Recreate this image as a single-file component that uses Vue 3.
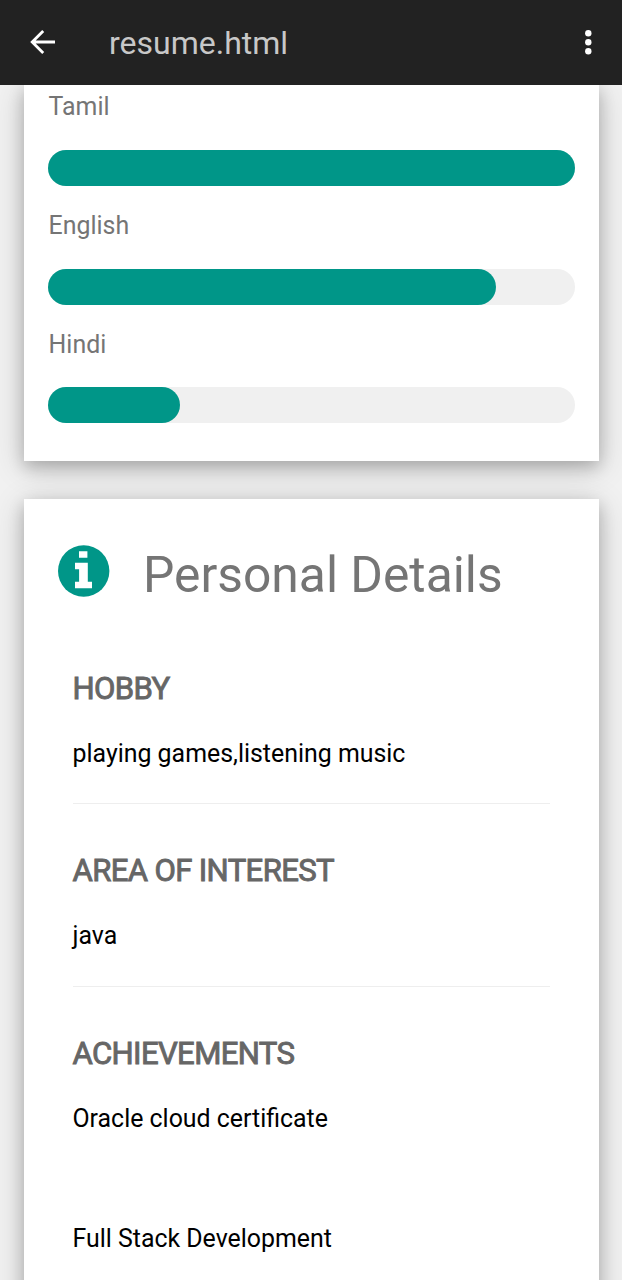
<script setup>
const languages = [
  { name: 'Tamil', level: 100 },
  { name: 'English', level: 85 },
  { name: 'Hindi', level: 25 }
]

const details = [
  { title: 'HOBBY', items: ['playing games,listening music'] },
  { title: 'AREA OF INTEREST', items: ['java'] },
  { title: 'ACHIEVEMENTS', items: ['Oracle cloud certificate', 'Full Stack Development'] }
]
</script>

<template>
  <div class="screen">
    <header class="toolbar">
      <svg class="back" width="26" height="26" viewBox="0 0 26 26">
        <path d="M25 13H2.5M13.2 2 2.2 13l11 11" fill="none" stroke="#fff" stroke-width="2.8" />
      </svg>
      <span class="file">resume.html</span>
      <svg class="more" width="8" height="26" viewBox="0 0 8 26">
        <circle cx="4.3" cy="4.2" r="3.2" fill="#fff" />
        <circle cx="4.3" cy="13.2" r="3.2" fill="#fff" />
        <circle cx="4.3" cy="22.2" r="3.2" fill="#fff" />
      </svg>
    </header>

    <main class="page">
      <section class="card languages">
        <div v-for="lang in languages" :key="lang.name" class="language">
          <p class="label">{{ lang.name }}</p>
          <div class="track">
            <div class="fill" :style="{ width: lang.level + '%' }"></div>
          </div>
        </div>
      </section>

      <section class="card personal">
        <h2 class="heading">
          <svg class="info" width="52" height="52" viewBox="0 0 52 52">
            <circle cx="25.7" cy="26" r="25.7" fill="#009688" />
            <path d="M21 6.3h8.4v6.5H21zM17 17.7h12.8v19.1H34v6.5H17v-6.5h4.1V24.2H17z" fill="#fff" />
          </svg>
          <span>Personal Details</span>
        </h2>
        <div v-for="group in details" :key="group.title" class="group">
          <h5 class="title">{{ group.title }}</h5>
          <p v-for="item in group.items" :key="item" class="item">{{ item }}</p>
        </div>
      </section>
    </main>
  </div>
</template>

<style>
html,
body {
  margin: 0;
  overflow: hidden;
  background: #f1f1f1;
}
</style>

<style scoped>
.screen {
  width: 622px;
  height: 1280px;
  display: flex;
  flex-direction: column;
  overflow: hidden;
  background: #f1f1f1;
  font-family: Roboto, sans-serif;
  color: #000;
}

.toolbar {
  flex: none;
  box-sizing: border-box;
  height: 84.5px;
  padding: 0 30px;
  display: flex;
  align-items: center;
  background: #222;
}

.file {
  margin-left: 53px;
  font-size: 32px;
  line-height: 40px;
  padding-top: 1.5px;
  color: #c8c8c8;
}

.more {
  margin-left: auto;
}

.page {
  flex: 1;
  min-height: 0;
  overflow: hidden;
  padding: 0 23.5px 0 24px;
}

.card {
  background: #fff;
  box-shadow: 0 6px 15px rgba(0, 0, 0, 0.2), 0 6px 30px rgba(0, 0, 0, 0.19);
}

.languages {
  box-sizing: border-box;
  height: 376.9px;
  padding: 4.4px 24px 0 24.3px;
}

.language {
  height: 118.75px;
}

.label {
  margin: 0 0 24.4px;
  padding-top: 0.6px;
  padding-left: 0.3px;
  font-size: 24.9px;
  line-height: 36px;
  color: #757575;
}

.track {
  height: 36px;
  border-radius: 18px;
  background: #f0f0f0;
}

.fill {
  height: 36px;
  border-radius: 18px;
  background: #009688;
}

.personal {
  margin-top: 37.5px;
  height: 900px;
  padding: 0 48.5px;
}

.heading {
  box-sizing: border-box;
  margin: 0 0 0 -15px;
  padding-top: 39px;
  height: 122.1px;
  display: flex;
  align-items: flex-start;
  font-size: 49.75px;
  font-weight: 400;
  line-height: 75px;
  color: #757575;
}

.info {
  margin-top: 6.8px;
  margin-right: 33.5px;
}

.group {
  box-sizing: border-box;
  height: 182.8px;
}

.group:not(:last-child) {
  border-bottom: 1px solid #eee;
}

.title {
  margin: 0;
  padding-top: 44.7px;
  font-size: 31.1px;
  font-weight: 400;
  line-height: 45px;
  letter-spacing: -0.64px;
  color: #666;
  -webkit-text-stroke: 0.9px #666;
}

.item {
  margin: 25px 0 84px;
  font-size: 24.9px;
  line-height: 36px;
}
</style>
